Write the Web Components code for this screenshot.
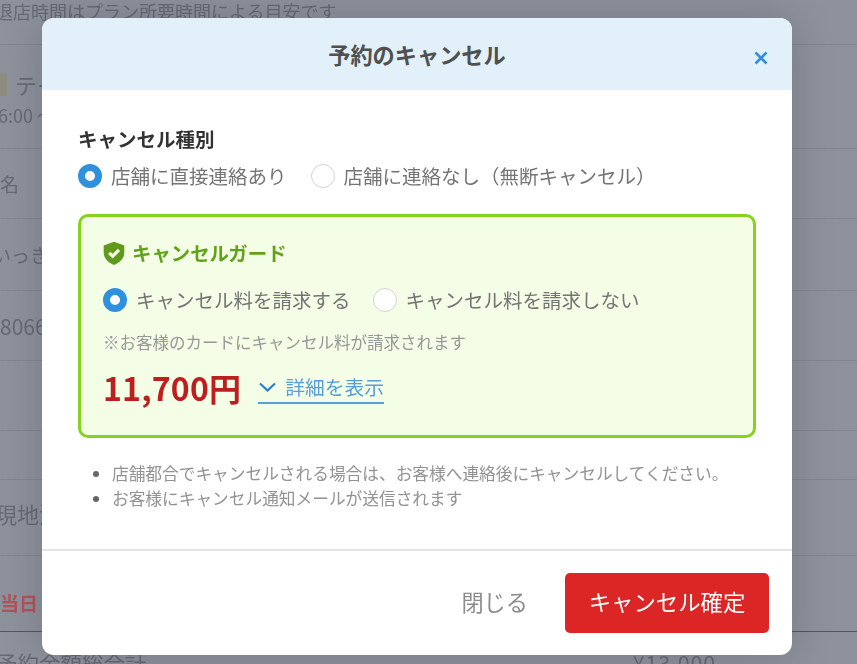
<!DOCTYPE html>
<html lang="ja">
<head>
<meta charset="utf-8">
<title>予約のキャンセル</title>
<style>
  html, body { margin: 0; height: 100%; overflow: hidden; background: #8e929c; }
  body { font-family: "Noto Sans CJK JP", "Noto Sans", sans-serif; }
</style>
</head>
<body>
<booking-page></booking-page>
<modal-layer>
  <cancel-modal heading="予約のキャンセル">
    <field-title>キャンセル種別</field-title>
    <radio-row gap="24">
      <radio-item checked>店舗に直接連絡あり</radio-item>
      <radio-item>店舗に連絡なし（無断キャンセル）</radio-item>
    </radio-row>
    <guard-box>
      <radio-row slot="options" gap="22">
        <radio-item checked>キャンセル料を請求する</radio-item>
        <radio-item>キャンセル料を請求しない</radio-item>
      </radio-row>
    </guard-box>
    <note-list>
      <li>店舗都合でキャンセルされる場合は、お客様へ連絡後にキャンセルしてください。</li>
      <li>お客様にキャンセル通知メールが送信されます</li>
    </note-list>
  </cancel-modal>
</modal-layer>

<script>
class BookingPage extends HTMLElement {
  connectedCallback() {
    this.attachShadow({ mode: 'open' });
    this.shadowRoot.innerHTML = `
      <style>
        :host { display: block; height: 664px; overflow: hidden; color: #666a73; font-size: 19px; filter: blur(.6px); }
        .row { box-sizing: border-box; border-bottom: 1px solid #82868f; display: flex; align-items: center; white-space: nowrap; justify-content: space-between; }
        .top { align-items: flex-start; margin-left: -5px; font-size: 18px; line-height: 28px; margin-top: -5px; height: 50px; padding-top: 2px; }
        .tall { height: 104px; display: block; padding-top: 26px; }
        .tall b { font-weight: 400; display: flex; align-items: center; gap: 8px; margin-left: -13px; font-size: 22px; line-height: 26px; }
        .tall i { width: 20px; height: 23px; background: #8f8d80; display: block; }
        .tall small { display: block; font-size: 18px; line-height: 26px; margin-left: -12px; margin-top: 5px; }
        .r70 { height: 70px; }
        .r72 { height: 72px; }
        .r49 { height: 49px; }
        .r76 { height: 76px; }
        .name { justify-content: flex-start; gap: 18px; }
        .kana { margin-left: -8px; justify-content: flex-start; }
        .tel { justify-content: flex-start; font-size: 21px; }
        .cash { margin-left: -5px; font-size: 22px; justify-content: flex-start; padding-bottom: 9px; }
        .when { color: #b5515a; font-weight: 700; font-size: 19px; border-bottom-color: #54565d; justify-content: flex-start; padding-top: 17px; }
        .total { height: 40px; align-items: flex-start; border: 0; padding-top: 15px; font-size: 21.5px; padding-right: 141px; margin-left: -4px; }
        .total span:last-child { letter-spacing: .8px; }
      </style>
      <div class="row top">退店時間はプラン所要時間による目安です</div>
      <div class="row tall"><b><i></i>テーブル席</b><small>16:00 〜</small></div>
      <div class="row r70 name"><span>名</span><span>（</span></div>
      <div class="row r72 kana">いっき</div>
      <div class="row r70 tel">8066</div>
      <div class="row r70"></div>
      <div class="row r49"></div>
      <div class="row r76 cash">現地決済</div>
      <div class="row r76 when">当日</div>
      <div class="row total"><span>予約金額総合計</span><span>¥13,000</span></div>
    `;
  }
}

class ModalLayer extends HTMLElement {
  connectedCallback() {
    this.attachShadow({ mode: 'open' });
    this.shadowRoot.innerHTML = `
      <style>
        :host { position: fixed; inset: 0; display: flex; justify-content: flex-start; align-items: flex-start; padding: 18px 0 0 42px; filter: blur(.45px); }
      </style>
      <slot></slot>
    `;
  }
}

class CancelModal extends HTMLElement {
  connectedCallback() {
    this.attachShadow({ mode: 'open' });
    this.shadowRoot.innerHTML = `
      <style>
        :host { display: flex; flex-direction: column; box-sizing: border-box; width: 750px; height: 637px; background: #fff; border-radius: 12px; overflow: hidden; box-shadow: 0 0 40px rgba(30, 34, 44, .22); color: #6b6b6b; }
        header { height: 72px; flex: none; background: #e2f0fa; display: flex; align-items: center; justify-content: center; position: relative; }
        h2 { margin: 0; font-size: 22.2px; font-weight: 700; color: #505050; }
        .close { position: absolute; right: 24px; top: 33px; width: 14px; height: 14px; display: block; }
        main { flex: 1; padding: 35px 36px 0; }
        footer { flex: none; height: 106px; box-sizing: border-box; border-top: 2px solid #e4e4e4; padding: 22px 23px 0 0; display: flex; justify-content: flex-end; gap: 37px; }
        button { font: inherit; border: 0; background: none; padding: 0 0 4px; cursor: pointer; height: 60px; }
        .ghost { color: #8d8d8d; font-size: 22.2px; }
        .danger { width: 204px; background: #dc2626; color: #fff; border-radius: 5px; font-size: 22.4px; }
      </style>
      <header>
        <h2>${this.getAttribute('heading')}</h2>
        <svg class="close" viewBox="0 0 14 14" fill="none" stroke="#2f8fdd" stroke-width="2.6"><path d="M1.5 1.5l11 11M12.5 1.5l-11 11"/></svg>
      </header>
      <main><slot></slot></main>
      <footer>
        <button class="ghost">閉じる</button>
        <button class="danger">キャンセル確定</button>
      </footer>
    `;
  }
}

class FieldTitle extends HTMLElement {
  connectedCallback() {
    this.attachShadow({ mode: 'open' });
    this.shadowRoot.innerHTML = `
      <style>
        :host { display: block; font-size: 19.5px; line-height: 28px; font-weight: 700; color: #333; margin-bottom: 9px; }
      </style>
      <slot></slot>
    `;
  }
}

class RadioRow extends HTMLElement {
  connectedCallback() {
    this.attachShadow({ mode: 'open' });
    const gap = this.getAttribute('gap') || 25;
    this.shadowRoot.innerHTML = `
      <style>
        :host { display: flex; align-items: center; gap: ${gap}px; }
      </style>
      <slot></slot>
    `;
  }
}

class RadioItem extends HTMLElement {
  connectedCallback() {
    this.attachShadow({ mode: 'open' });
    this.shadowRoot.innerHTML = `
      <style>
        :host { display: flex; align-items: center; gap: 9px; font-size: 19.5px; line-height: 28px; color: #747474; white-space: nowrap; }
        .dot { box-sizing: border-box; width: 24px; height: 24px; border-radius: 50%; background: #fff; border: 1px solid #d4d4d4; flex: none; }
        :host([checked]) .dot { border: 7px solid #2f91de; }
      </style>
      <span class="dot"></span><slot></slot>
    `;
  }
}

class GuardBox extends HTMLElement {
  connectedCallback() {
    this.attachShadow({ mode: 'open' });
    this.shadowRoot.innerHTML = `
      <style>
        :host { display: block; box-sizing: border-box; height: 224px; margin-top: 24px; padding: 22px 22px 0; background: #f4fde6; border: 3px solid #84d31e; border-radius: 10px; }
        .title { display: flex; align-items: center; gap: 5px; font-size: 19.4px; line-height: 28px; font-weight: 700; color: #5fa318; margin-left: -2px; }
        .title svg { width: 26px; height: 26px; flex: none; }
        ::slotted([slot=options]) { margin-top: 19px; }
        .note { font-size: 16.5px; line-height: 22px; color: #979797; margin-top: 17px; white-space: nowrap; }
        .fee { display: flex; align-items: center; gap: 17px; margin-top: 12px; }
        .price { font-size: 32px; line-height: 44px; font-weight: 700; color: #bd1e1e; white-space: nowrap; letter-spacing: .2px; }
        .more { display: flex; align-items: center; gap: 8px; font-size: 19.8px; line-height: 26px; color: #559fdc; border-bottom: 2px solid #559fdc; margin-top: 3px; padding-bottom: 2px; }
        .more svg { width: 19px; height: 10px; }
      </style>
      <div class="title">
        <svg viewBox="0 0 24 24"><path fill="#5f9a1c" d="M12 1.5l9.5 3.6v6.3c0 5.5-3.9 9.7-9.5 11.6-5.6-1.9-9.5-6.1-9.5-11.6V5.1z"/><path fill="none" stroke="#f4fde6" stroke-width="3" d="M7.6 11.8l3.2 3.2 5.8-5.8"/></svg>
        キャンセルガード
      </div>
      <slot name="options"></slot>
      <div class="note">※お客様のカードにキャンセル料が請求されます</div>
      <div class="fee">
        <span class="price">11,700円</span>
        <span class="more">
          <svg viewBox="0 0 19 10" fill="none" stroke="#2f7fc4" stroke-width="2.2"><path d="M2 1.5l7.5 7 7.5-7"/></svg>
          詳細を表示
        </span>
      </div>
    `;
  }
}

class NoteList extends HTMLElement {
  connectedCallback() {
    this.attachShadow({ mode: 'open' });
    this.shadowRoot.innerHTML = `
      <style>
        :host { display: block; margin-top: 23px; font-size: 16.7px; line-height: 25px; color: #929292; }
        ul { margin: 0; padding: 0 0 0 34px; }
        ::slotted(li)::marker { color: #666; }
      </style>
      <ul><slot></slot></ul>
    `;
  }
}

customElements.define('booking-page', BookingPage);
customElements.define('modal-layer', ModalLayer);
customElements.define('cancel-modal', CancelModal);
customElements.define('field-title', FieldTitle);
customElements.define('radio-row', RadioRow);
customElements.define('radio-item', RadioItem);
customElements.define('guard-box', GuardBox);
customElements.define('note-list', NoteList);
</script>
</body>
</html>
